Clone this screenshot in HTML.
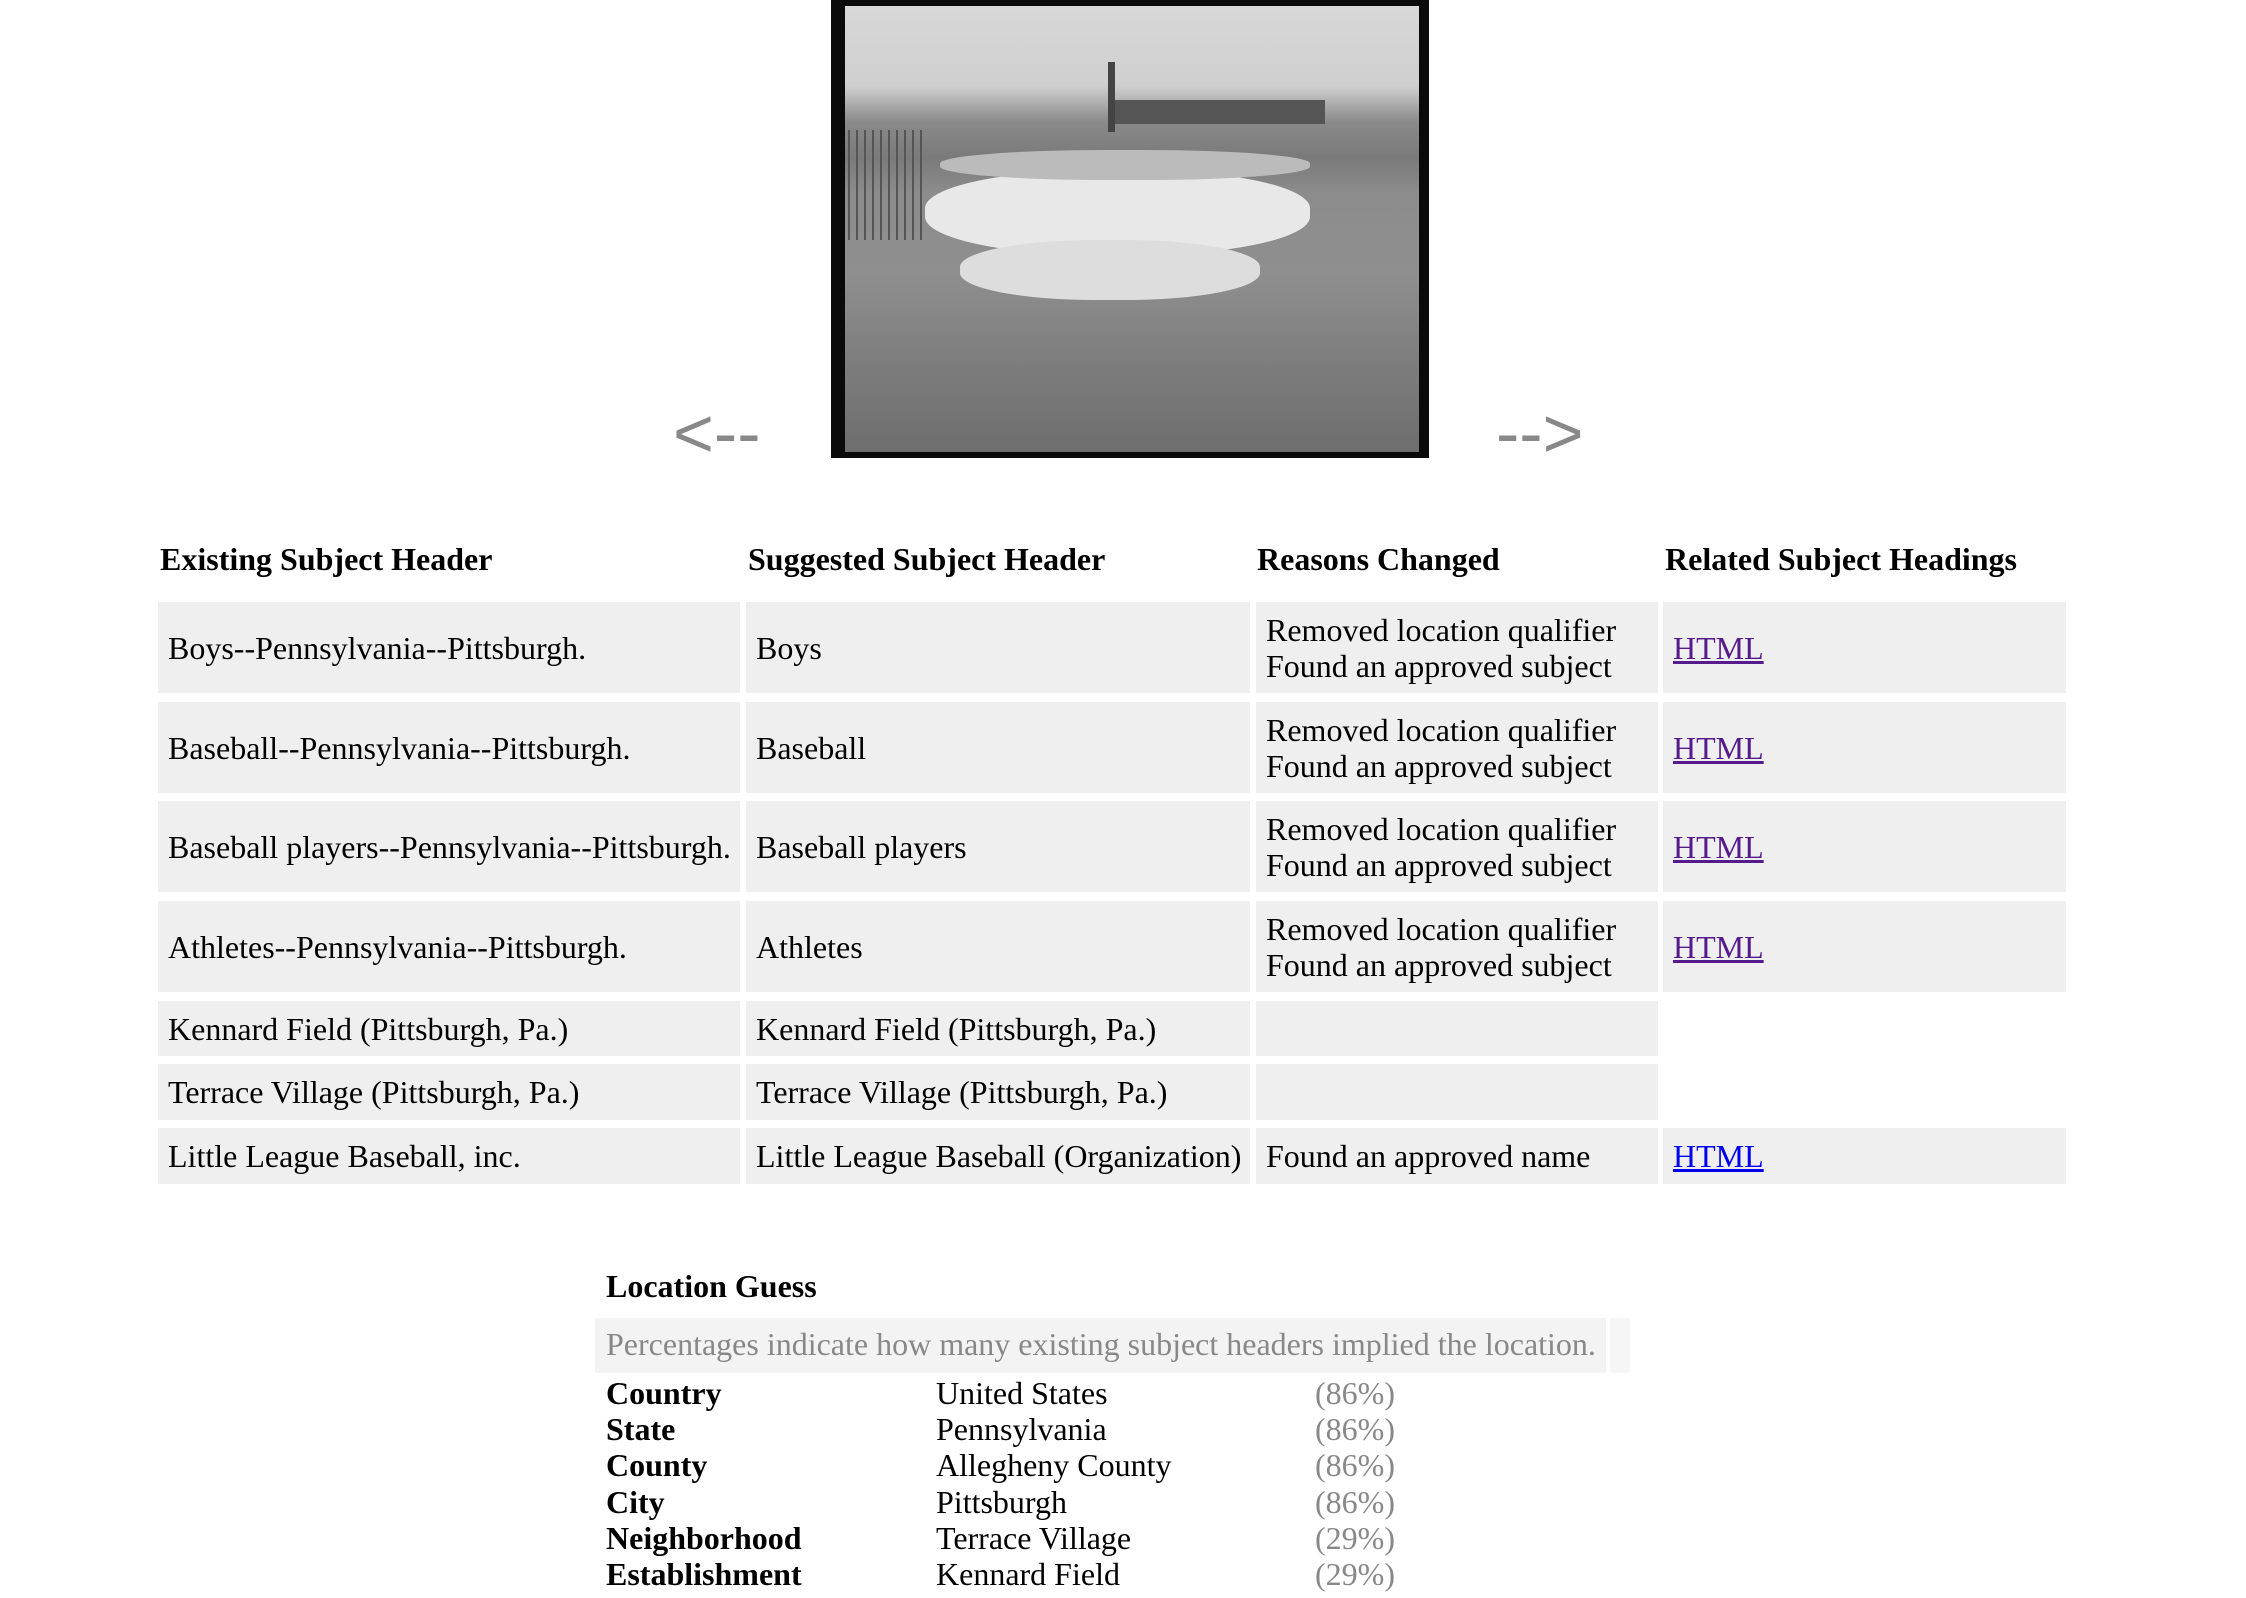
<!DOCTYPE html>
<html><head><meta charset="utf-8"><style>
body{margin:0;background:#fff;width:2246px;height:1598px;position:relative;overflow:hidden;font-family:"Liberation Serif",serif;font-size:32px;color:#000}
.a{position:absolute}
.c{position:absolute;background:#efefef;box-sizing:border-box;padding:0 10px;display:flex;flex-direction:column;justify-content:center;line-height:36px;white-space:nowrap}
.h{position:absolute;font-weight:bold;top:541px}
a{text-decoration:underline}
.v{color:#551a8b}.b{color:#0000ee}
.g{color:#888}
.p{position:absolute;border-radius:45%;background:#eee}
</style></head><body>
<div class="a" style="left:831px;top:0;width:598px;height:458px;background:#0a0a0a"></div>
<div class="a" style="left:845px;top:6px;width:574px;height:446px;background:linear-gradient(#d8d8d8 0%,#cfcfcf 18%,#8a8a8a 26%,#7a7a7a 34%,#8c8c8c 42%,#8f8f8f 60%,#7d7d7d 80%,#6e6e6e 100%)"></div>
<div class="a" style="left:1108px;top:62px;width:7px;height:70px;background:#444"></div>
<div class="a" style="left:1115px;top:100px;width:210px;height:24px;background:#555"></div>
<div class="a" style="left:848px;top:130px;width:80px;height:110px;background:repeating-linear-gradient(90deg,#555 0 2px,transparent 2px 8px)"></div>
<div class="p" style="left:925px;top:170px;width:385px;height:85px;background:#e8e8e8"></div>
<div class="p" style="left:960px;top:240px;width:300px;height:60px;background:#ddd"></div>
<div class="p" style="left:940px;top:150px;width:370px;height:30px;background:#bbb"></div>
<div class="a" style="left:673px;top:393px;font-size:70px;color:#888;font-family:'Liberation Sans',sans-serif">&lt;--</div>
<div class="a" style="left:1496px;top:393px;font-size:70px;color:#888;font-family:'Liberation Sans',sans-serif">--&gt;</div>

<div class="h" style="left:160px">Existing Subject Header</div>
<div class="h" style="left:748px">Suggested Subject Header</div>
<div class="h" style="left:1257px">Reasons Changed</div>
<div class="h" style="left:1665px">Related Subject Headings</div>

<div class="c" style="left:158px;top:602px;width:582px;height:91px">Boys--Pennsylvania--Pittsburgh.</div>
<div class="c" style="left:746px;top:602px;width:504px;height:91px">Boys</div>
<div class="c" style="left:1256px;top:602px;width:402px;height:91px">Removed location qualifier<br>Found an approved subject</div>
<div class="c" style="left:1663px;top:602px;width:403px;height:91px"><a class="v">HTML</a></div>

<div class="c" style="left:158px;top:702px;width:582px;height:91px">Baseball--Pennsylvania--Pittsburgh.</div>
<div class="c" style="left:746px;top:702px;width:504px;height:91px">Baseball</div>
<div class="c" style="left:1256px;top:702px;width:402px;height:91px">Removed location qualifier<br>Found an approved subject</div>
<div class="c" style="left:1663px;top:702px;width:403px;height:91px"><a class="v">HTML</a></div>

<div class="c" style="left:158px;top:801px;width:582px;height:91px">Baseball players--Pennsylvania--Pittsburgh.</div>
<div class="c" style="left:746px;top:801px;width:504px;height:91px">Baseball players</div>
<div class="c" style="left:1256px;top:801px;width:402px;height:91px">Removed location qualifier<br>Found an approved subject</div>
<div class="c" style="left:1663px;top:801px;width:403px;height:91px"><a class="v">HTML</a></div>

<div class="c" style="left:158px;top:901px;width:582px;height:91px">Athletes--Pennsylvania--Pittsburgh.</div>
<div class="c" style="left:746px;top:901px;width:504px;height:91px">Athletes</div>
<div class="c" style="left:1256px;top:901px;width:402px;height:91px">Removed location qualifier<br>Found an approved subject</div>
<div class="c" style="left:1663px;top:901px;width:403px;height:91px"><a class="v">HTML</a></div>

<div class="c" style="left:158px;top:1001px;width:582px;height:55px">Kennard Field (Pittsburgh, Pa.)</div>
<div class="c" style="left:746px;top:1001px;width:504px;height:55px">Kennard Field (Pittsburgh, Pa.)</div>
<div class="c" style="left:1256px;top:1001px;width:402px;height:55px"></div>

<div class="c" style="left:158px;top:1064px;width:582px;height:56px">Terrace Village (Pittsburgh, Pa.)</div>
<div class="c" style="left:746px;top:1064px;width:504px;height:56px">Terrace Village (Pittsburgh, Pa.)</div>
<div class="c" style="left:1256px;top:1064px;width:402px;height:56px"></div>

<div class="c" style="left:158px;top:1128px;width:582px;height:56px">Little League Baseball, inc.</div>
<div class="c" style="left:746px;top:1128px;width:504px;height:56px">Little League Baseball (Organization)</div>
<div class="c" style="left:1256px;top:1128px;width:402px;height:56px">Found an approved name</div>
<div class="c" style="left:1663px;top:1128px;width:403px;height:56px"><a class="b">HTML</a></div>

<div class="a" style="left:606px;top:1268px;font-weight:bold">Location Guess</div>
<div class="a" style="left:595px;top:1318px;width:1011px;height:55px;background:#f3f3f3"></div>
<div class="a" style="left:1610px;top:1318px;width:20px;height:55px;background:#f6f6f6"></div>
<div class="a g" style="left:606px;top:1326px">Percentages indicate how many existing subject headers implied the location.</div>
<div class="a" style="left:606px;top:1375px;line-height:36.2px;font-weight:bold">Country<br>State<br>County<br>City<br>Neighborhood<br>Establishment</div>
<div class="a" style="left:936px;top:1375px;line-height:36.2px">United States<br>Pennsylvania<br>Allegheny County<br>Pittsburgh<br>Terrace Village<br>Kennard Field</div>
<div class="a g" style="left:1315px;top:1375px;line-height:36.2px">(86%)<br>(86%)<br>(86%)<br>(86%)<br>(29%)<br>(29%)</div>
</body></html>
